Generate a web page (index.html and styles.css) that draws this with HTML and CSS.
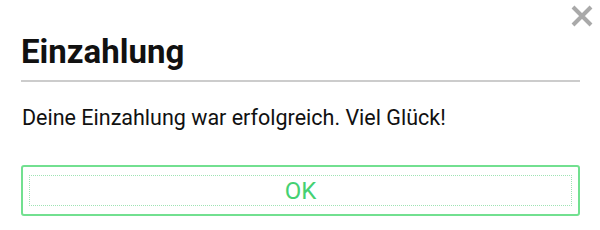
FILE: index.html
```html
<!DOCTYPE html>
<html>
<head>
<meta charset="utf-8">
<link rel="stylesheet" href="styles.css">
</head>
<body>
<div class="dialog">
  <button class="close" aria-label="Schließen">
    <svg width="24" height="24" viewBox="0 0 24 24"><path d="M3 3 L21 21 M21 3 L3 21" stroke="#a9a9a9" stroke-width="4" stroke-linecap="butt"/></svg>
  </button>
  <h1 class="title">Einzahlung</h1>
  <p class="message">Deine Einzahlung war erfolgreich. Viel Glück!</p>
  <button class="ok"><span class="ok-inner">OK</span></button>
</div>
</body>
</html>
```
FILE: styles.css
```css
html, body {
  margin: 0;
  padding: 0;
  background: #ffffff;
}
body {
  font-family: Roboto, "Liberation Sans", sans-serif;
  width: 600px;
  height: 230px;
  overflow: hidden;
}
.dialog {
  position: relative;
  padding: 34px 20px 0 21px;
}
.close {
  position: absolute;
  top: 4px;
  right: 6px;
  width: 24px;
  height: 24px;
  padding: 0;
  border: 0;
  background: none;
}
.close svg { display: block; }
.title {
  margin: 0;
  padding: 0 0 10px 0;
  font-size: 33px;
  font-weight: 700;
  line-height: 36px;
  color: #111111;
  border-bottom: 2px solid #cccccc;
}
.message {
  margin: 0;
  padding: 23px 0 0 1px;
  font-size: 21.5px;
  line-height: 26px;
  color: #111111;
}
.ok {
  display: block;
  box-sizing: border-box;
  margin-top: 34px;
  width: 559px;
  height: 51px;
  padding: 8px 6px;
  border: 2px solid #72e090;
  border-radius: 3px;
  background: #ffffff;
  font-family: inherit;
}
.ok-inner {
  display: flex;
  align-items: center;
  justify-content: center;
  height: 100%;
  box-sizing: border-box;
  border: 1px dotted #9fe3b4;
  font-size: 24px;
  color: #45d172;
}
```
